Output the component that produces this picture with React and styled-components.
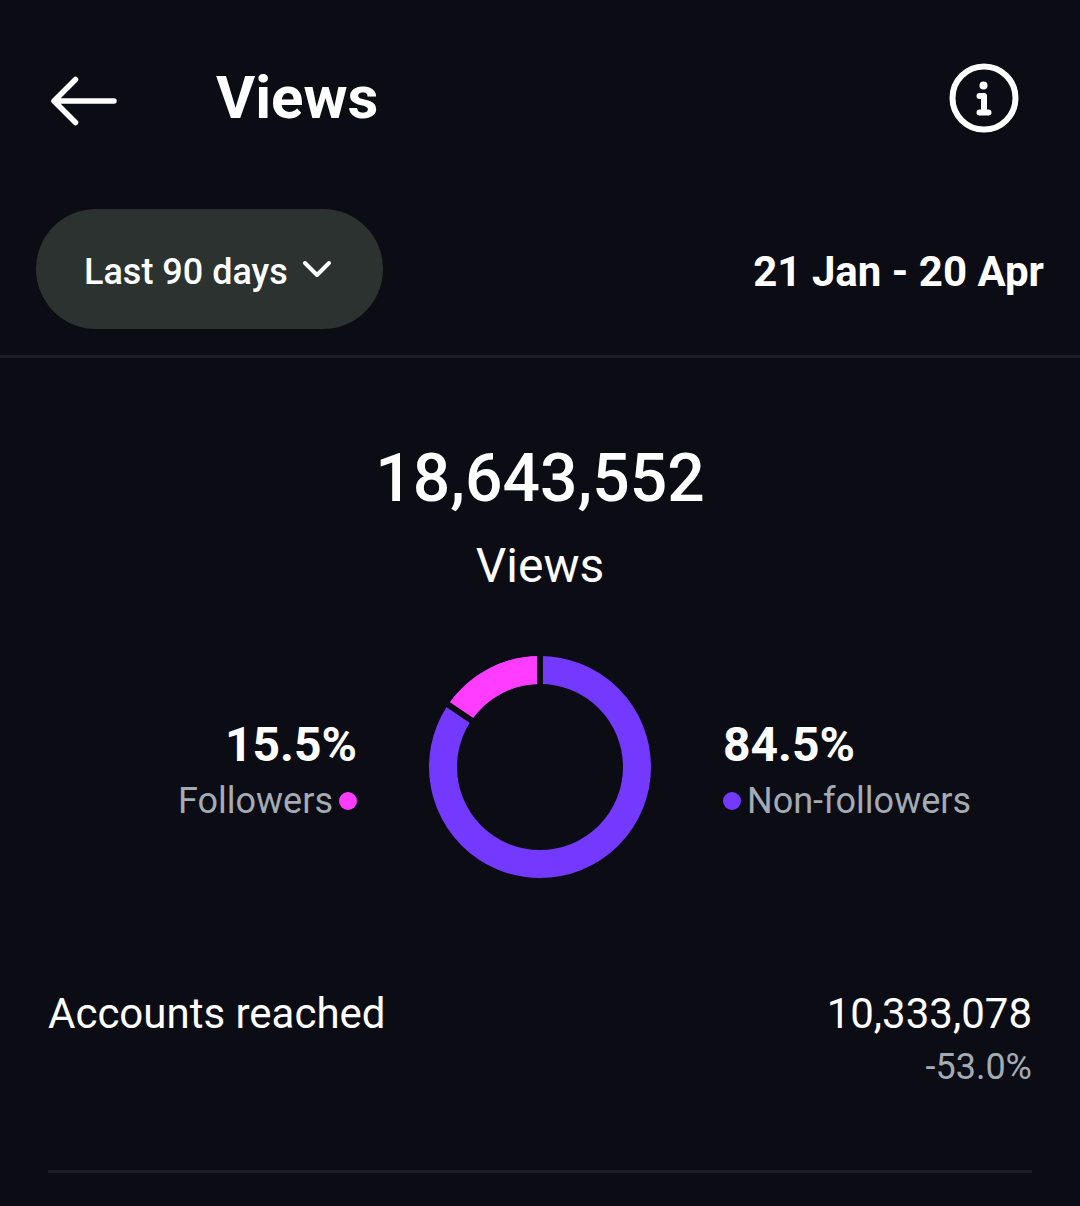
import React, { useState } from "react";
import styled, { createGlobalStyle } from "styled-components";

const GlobalStyle = createGlobalStyle`
  * {
    box-sizing: border-box;
  }

  body {
    margin: 0;
    background: #0c0c14;
    color: #fff;
    font-family: Roboto, "Liberation Sans", sans-serif;
  }
`;

const Header = styled.header`
  display: flex;
  align-items: center;
  min-height: 196px;
  padding: 0 60px 0 48px;
`;

const IconButton = styled.button`
  display: flex;
  padding: 0;
  border: 0;
  background: none;
  color: inherit;
  cursor: pointer;
`;

const Title = styled.h1`
  flex: 1;
  margin: 0 0 0 96px;
  font-size: 60px;
  font-weight: 700;
  line-height: 72px;
`;

const FilterBar = styled.div`
  display: flex;
  align-items: center;
  justify-content: space-between;
  padding: 13px 36px 26px;
  border-bottom: 3px solid #1e1d26;
`;

const SelectWrap = styled.div`
  position: relative;
`;

const Select = styled.select`
  appearance: none;
  field-sizing: content;
  height: 120px;
  padding: 6px 95px 0 48px;
  border: 0;
  border-radius: 60px;
  background: #2b322f;
  color: inherit;
  font-family: inherit;
  font-size: 36px;
  font-weight: 500;
  cursor: pointer;
`;

const Chevron = styled.svg`
  position: absolute;
  top: 48px;
  right: 48px;
  pointer-events: none;
`;

const DateRange = styled.span`
  padding-top: 5px;
  font-size: 42px;
  font-weight: 700;
  line-height: 56px;
`;

const Summary = styled.section`
  display: flex;
  flex-direction: column;
  align-items: center;
  padding-top: 80px;
`;

const Total = styled.div`
  font-size: 66px;
  font-weight: 500;
  line-height: 82px;
`;

const TotalLabel = styled.div`
  margin-top: 18px;
  font-size: 48px;
  line-height: 56px;
`;

const Breakdown = styled.section`
  display: grid;
  grid-template-columns: 1fr auto 1fr;
  align-items: center;
  gap: 72px;
  padding-top: 62px;
`;

const Share = styled.div`
  display: flex;
  flex-direction: column;
  align-items: ${(props) => (props.$align === "right" ? "flex-end" : "flex-start")};
`;

const Percent = styled.div`
  font-size: 48px;
  font-weight: 700;
  line-height: 68px;
`;

const Legend = styled.div`
  display: flex;
  flex-direction: ${(props) => (props.$align === "right" ? "row-reverse" : "row")};
  align-items: center;
  gap: 6px;
  color: #a3abb5;
  font-size: 36px;
  line-height: 44px;
`;

const Dot = styled.span`
  width: 18px;
  height: 18px;
  border-radius: 50%;
  background: ${(props) => props.$color};
`;

const Reached = styled.section`
  display: flex;
  justify-content: space-between;
  margin: 108px 48px 0;
  padding-bottom: 78px;
  border-bottom: 3px solid #1e1d26;
  font-size: 42px;
  line-height: 56px;
`;

const ReachedLabel = styled.h2`
  margin: 0;
  font-size: inherit;
  font-weight: 400;
`;

const Figures = styled.div`
  text-align: right;
`;

const Change = styled.div`
  color: #a3abb5;
  font-size: 36px;
  line-height: 50px;
`;

const PINK = "#ff3cff";
const PURPLE = "#7339ff";

const ranges = ["Last 7 days", "Last 30 days", "Last 90 days"];

const point = (radius, fraction) => {
  const angle = fraction * 2 * Math.PI;
  return `${111 + radius * Math.sin(angle)} ${111 - radius * Math.cos(angle)}`;
};

const Donut = ({ share }) => {
  const arc = `M${point(97, share)} A97 97 0 0 1 ${point(97, 1)}`;

  return (
    <svg width="222" height="222" viewBox="0 0 222 222" fill="none" role="img" aria-label="Views by audience">
      <circle cx="111" cy="111" r="97" stroke={PURPLE} strokeWidth="28" />
      <path d={arc} stroke={PINK} strokeWidth="28" />
      {/* gaps between the two slices */}
      <path d={`M${point(80, 0)} L${point(114, 0)}`} stroke="#0c0c14" strokeWidth="6" />
      <path d={`M${point(80, share)} L${point(114, share)}`} stroke="#0c0c14" strokeWidth="6" />
    </svg>
  );
};

const ShareItem = ({ align, percent, label, color }) => (
  <Share $align={align}>
    <Percent>{percent}</Percent>
    <Legend $align={align}>
      <Dot $color={color} />
      <span>{label}</span>
    </Legend>
  </Share>
);

const App = () => {
  const [range, setRange] = useState("Last 90 days");

  return (
    <>
      <GlobalStyle />
      <Header>
        <IconButton aria-label="Back">
          <svg width="72" height="72" viewBox="0 0 72 72" fill="none" stroke="#fff" strokeWidth="5.5" strokeLinecap="round" strokeLinejoin="round">
            <path d="M27.5 17.5 L6 39 L27.5 60.5 M7 39 H66" />
          </svg>
        </IconButton>
        <Title>Views</Title>
        <IconButton aria-label="Information">
          <svg width="72" height="72" viewBox="0 0 72 72" fill="none" stroke="#fff" strokeLinecap="round" strokeLinejoin="round">
            <circle cx="36" cy="36" r="31.5" strokeWidth="6" />
            <circle cx="35.5" cy="23.5" r="4" fill="#fff" stroke="none" />
            <path d="M31.5 34 H36 V50.5 M31.5 50.5 H40.5" strokeWidth="6" />
          </svg>
        </IconButton>
      </Header>

      <FilterBar>
        <SelectWrap>
          <Select aria-label="Date range" value={range} onChange={(e) => setRange(e.target.value)}>
            {ranges.map((item) => (
              <option key={item}>{item}</option>
            ))}
          </Select>
          <Chevron width="36" height="24" viewBox="0 0 36 24" fill="none" stroke="#fff" strokeWidth="4" strokeLinecap="round" strokeLinejoin="round">
            <path d="M6 6 L18 18 L30 6" />
          </Chevron>
        </SelectWrap>
        <DateRange>21 Jan - 20 Apr</DateRange>
      </FilterBar>

      <Summary>
        <Total>18,643,552</Total>
        <TotalLabel>Views</TotalLabel>
      </Summary>

      <Breakdown>
        <ShareItem align="right" percent="15.5%" label="Followers" color={PINK} />
        <Donut share={0.845} />
        <ShareItem align="left" percent="84.5%" label="Non-followers" color={PURPLE} />
      </Breakdown>

      <Reached>
        <ReachedLabel>Accounts reached</ReachedLabel>
        <Figures>
          <div>10,333,078</div>
          <Change>-53.0%</Change>
        </Figures>
      </Reached>
    </>
  );
};

export default App;
